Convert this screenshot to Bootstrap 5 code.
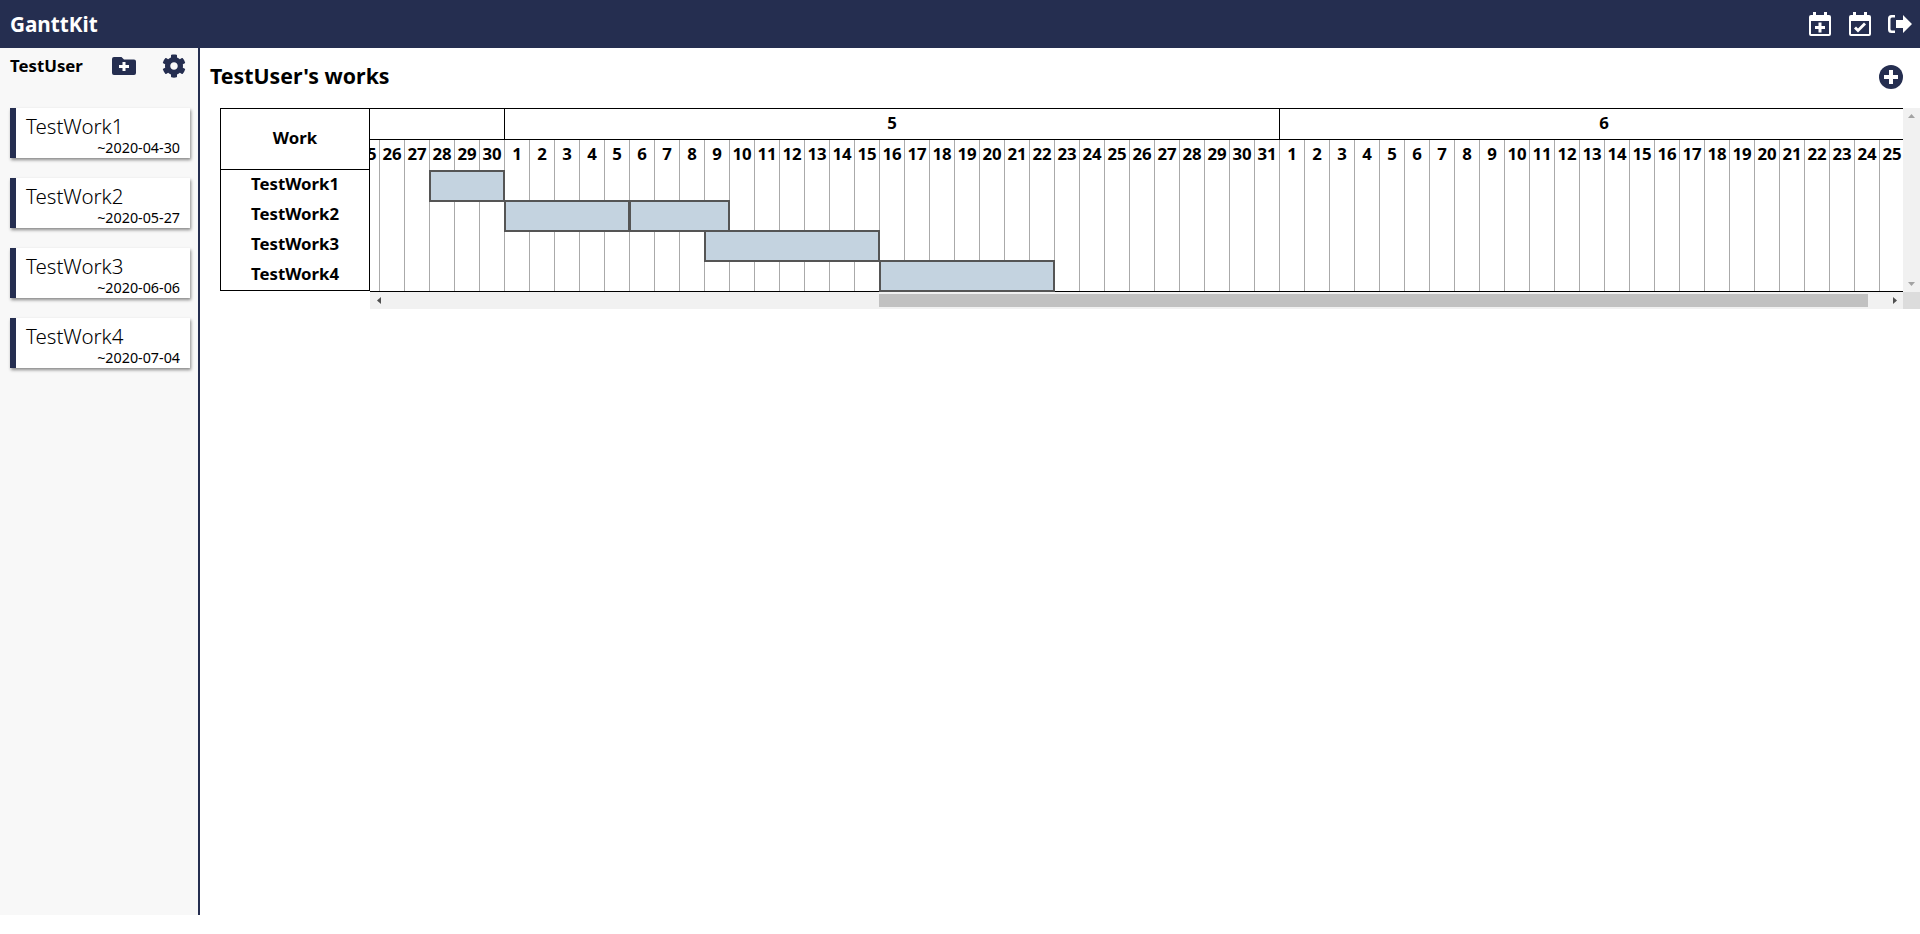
<!DOCTYPE html>
<html lang="en">
<head>
<meta charset="utf-8">
<title>GanttKit</title>
<link href="https://cdn.jsdelivr.net/npm/bootstrap@5.3.0/dist/css/bootstrap.min.css" rel="stylesheet">
<style>
html,body{height:100%;background:#fff;}
body{font-family:"Noto Sans",sans-serif;color:#000;}
.gk-nav{height:48px;background:#252e50;padding:0 8px 0 10px;}
.gk-brand{font-size:20.700px;font-weight:700;color:#fff;line-height:1;}
.gk-shell{height:867px;}
.gk-side{width:200px;flex:none;background:#f8f8f8;border-right:2px solid #252e50;}
.gk-sidehead{height:36px;margin-bottom:24px;padding:0 12px 0 10px;}
.gk-user{font-size:16.800px;font-weight:700;width:103px;}
.gk-work{height:50px;margin:0 8px 20px 10px;background:#fff;border-left:6px solid #252e50;box-shadow:1px 2px 3px rgba(0,0,0,.45);padding:5px 10px 0 10px;}
.gk-wname{font-size:20.500px;line-height:26px;font-weight:300;}
.gk-wdate{font-size:14.300px;line-height:18px;text-align:right;}
.gk-main{min-width:0;padding:0 0 0 10px;}
.gk-head{height:48px;margin-top:12px;padding-right:17px;}
.gk-title{font-size:21.300px;font-weight:700;margin:4px 0 0;line-height:24px;}
.gk-gantt{padding-left:10px;font-weight:700;font-size:16.800px;}
.gk-names{width:150px;flex:none;height:183px;border:1px solid #000;}
.gk-namehead{height:61px;border-bottom:1px solid #000;padding-bottom:2px;}
.gk-name{height:30px;padding-bottom:2px;}
.gk-chart{width:1550px;flex:none;}
.gk-view{width:1533px;height:184px;overflow:hidden;flex:none;}
.gk-months{height:32px;border-top:1px solid #000;border-bottom:1px solid #000;}
.gk-month{border-right:1px solid #000;line-height:27px;text-align:center;flex:none;}
.gk-m4{width:135px;}.gk-m5{width:775px;}.gk-m6{width:648px;border-right:0;}
.gk-days{height:30px;margin-left:-15px;}
.gk-day{width:25px;flex:none;border-right:1px solid #aaa;text-align:center;line-height:27px;white-space:nowrap;}
.gk-grid{position:relative;height:122px;border-bottom:1px solid #000;background:linear-gradient(to left,#aaa 1px,transparent 1px) 10px 0/25px 100% repeat-x;}
.gk-bar{position:absolute;height:32px;background:#c4d3e0;border:2px solid #555;}
.gk-vbar{width:17px;height:184px;background:#f1f1f1;padding:6px 0;}
.gk-hbar{width:1533px;height:17px;background:#f1f1f1;}
.gk-hbtn{width:17px;flex:none;}
.gk-gap{width:492px;flex:none;}
.gk-thumb{width:989px;height:13px;background:#c1c1c1;flex:none;}
.gk-corner{width:17px;height:17px;background:#dcdcdc;}
.gk-ico{display:block;flex:none;}
</style>
</head>
<body>
<nav class="navbar gk-nav d-flex justify-content-between align-items-center">
  <span class="gk-brand">GanttKit</span>
  <div class="d-flex align-items-center">
    <svg class="gk-ico" style="margin-right:18px" width="22" height="24" viewBox="0 0 22 24" fill="#fff"><path d="M4 0h3v3h8V0h3v3h2a2 2 0 0 1 2 2v17a2 2 0 0 1-2 2H2a2 2 0 0 1-2-2V5a2 2 0 0 1 2-2h2zM2 9v13h18V9z"/><path d="M9.500 10.500h3v3.500H16v3h-3.500v3.500h-3V17H6v-3h3.500z"/></svg>
    <svg class="gk-ico" style="margin-right:17px" width="22" height="24" viewBox="0 0 22 24" fill="#fff"><path d="M4 0h3v3h8V0h3v3h2a2 2 0 0 1 2 2v17a2 2 0 0 1-2 2H2a2 2 0 0 1-2-2V5a2 2 0 0 1 2-2h2zM2 9v13h18V9z"/><path d="M9 20.500l-4-4 2-2 2 2 6-6 2 2z"/></svg>
    <svg class="gk-ico" width="24" height="18" viewBox="0 0 24 18" fill="#fff"><path d="M15 0l9 9-9 9v-5H8V5h7z"/><path d="M7 0v2.500H4A1.500 1.500 0 0 0 2.500 4v10A1.500 1.500 0 0 0 4 15.500h3V18H3.500A3.500 3.500 0 0 1 0 14.500v-11A3.500 3.500 0 0 1 3.500 0z"/></svg>
  </div>
</nav>
<div class="d-flex gk-shell">
  <aside class="gk-side">
    <div class="gk-sidehead d-flex align-items-center">
      <span class="gk-user">TestUser</span>
      <svg class="gk-ico" width="24" height="18" viewBox="0 0 24 18" fill="#252e50"><path d="M2 0h7.500l2.500 2.500h10a2 2 0 0 1 2 2V16a2 2 0 0 1-2 2H2a2 2 0 0 1-2-2V2a2 2 0 0 1 2-2z"/><path d="M10.500 5h3v3H17v3h-3.500v3h-3v-3H7V8h3.500z" fill="#fff"/></svg>
      <svg class="gk-ico" style="margin-left:26px" width="24" height="24" viewBox="0 0 512 512" fill="#252e50"><path d="M487.400 315.700l-42.600-24.600c4.300-23.200 4.300-47 0-70.200l42.600-24.600c4.900-2.800 7.100-8.600 5.500-14-11.100-35.600-30-67.800-54.700-94.600-3.800-4.100-10-5.100-14.800-2.300L380.800 110c-17.900-15.400-38.500-27.300-60.800-35.100V25.800c0-5.600-3.900-10.500-9.400-11.700-36.700-8.200-74.300-7.800-109.200 0-5.500 1.200-9.400 6.100-9.400 11.700V75c-22.200 7.900-42.800 19.800-60.800 35.100L88.700 85.500c-4.900-2.800-11-1.900-14.800 2.300-24.700 26.700-43.600 58.900-54.700 94.600-1.700 5.400.6 11.200 5.500 14L67.300 221c-4.300 23.200-4.300 47 0 70.200l-42.600 24.600c-4.900 2.800-7.100 8.600-5.500 14 11.100 35.600 30 67.800 54.700 94.600 3.800 4.100 10 5.100 14.800 2.300l42.600-24.600c17.900 15.400 38.500 27.300 60.800 35.100v49.200c0 5.600 3.900 10.500 9.400 11.700 36.700 8.200 74.300 7.800 109.200 0 5.500-1.200 9.400-6.100 9.400-11.700v-49.200c22.200-7.900 42.800-19.800 60.800-35.100l42.600 24.600c4.900 2.800 11 1.900 14.800-2.300 24.700-26.700 43.600-58.900 54.700-94.600 1.500-5.500-.7-11.300-5.600-14.100zM256 336c-44.100 0-80-35.900-80-80s35.900-80 80-80 80 35.900 80 80-35.900 80-80 80z"/></svg>
    </div>
    <div class="gk-work"><div class="gk-wname">TestWork1</div><div class="gk-wdate">~2020-04-30</div></div>
    <div class="gk-work"><div class="gk-wname">TestWork2</div><div class="gk-wdate">~2020-05-27</div></div>
    <div class="gk-work"><div class="gk-wname">TestWork3</div><div class="gk-wdate">~2020-06-06</div></div>
    <div class="gk-work"><div class="gk-wname">TestWork4</div><div class="gk-wdate">~2020-07-04</div></div>
  </aside>
  <main class="gk-main flex-grow-1">
    <div class="gk-head d-flex justify-content-between align-items-start">
      <h1 class="gk-title">TestUser's works</h1>
      <svg class="gk-ico" style="margin-top:5px" width="24" height="24" viewBox="0 0 24 24"><circle cx="12" cy="12" r="12" fill="#252e50"/><path d="M10 5h4v5h5v4h-5v5h-4v-5H5v-4h5z" fill="#fff"/></svg>
    </div>
    <div class="gk-gantt d-flex align-items-start">
      <div class="gk-names text-center">
        <div class="gk-namehead d-flex align-items-center justify-content-center">Work</div>
        <div class="gk-name d-flex align-items-center justify-content-center">TestWork1</div>
        <div class="gk-name d-flex align-items-center justify-content-center">TestWork2</div>
        <div class="gk-name d-flex align-items-center justify-content-center">TestWork3</div>
        <div class="gk-name d-flex align-items-center justify-content-center">TestWork4</div>
      </div>
      <div class="gk-chart">
        <div class="d-flex">
          <div class="gk-view">
            <div class="gk-months d-flex"><div class="gk-month gk-m4"></div><div class="gk-month gk-m5">5</div><div class="gk-month gk-m6">6</div></div>
            <div class="gk-days d-flex">
              <div class="gk-day">25</div><div class="gk-day">26</div><div class="gk-day">27</div><div class="gk-day">28</div><div class="gk-day">29</div><div class="gk-day">30</div>
              <div class="gk-day">1</div><div class="gk-day">2</div><div class="gk-day">3</div><div class="gk-day">4</div><div class="gk-day">5</div><div class="gk-day">6</div><div class="gk-day">7</div><div class="gk-day">8</div><div class="gk-day">9</div><div class="gk-day">10</div><div class="gk-day">11</div><div class="gk-day">12</div><div class="gk-day">13</div><div class="gk-day">14</div><div class="gk-day">15</div><div class="gk-day">16</div><div class="gk-day">17</div><div class="gk-day">18</div><div class="gk-day">19</div><div class="gk-day">20</div><div class="gk-day">21</div><div class="gk-day">22</div><div class="gk-day">23</div><div class="gk-day">24</div><div class="gk-day">25</div><div class="gk-day">26</div><div class="gk-day">27</div><div class="gk-day">28</div><div class="gk-day">29</div><div class="gk-day">30</div><div class="gk-day">31</div>
              <div class="gk-day">1</div><div class="gk-day">2</div><div class="gk-day">3</div><div class="gk-day">4</div><div class="gk-day">5</div><div class="gk-day">6</div><div class="gk-day">7</div><div class="gk-day">8</div><div class="gk-day">9</div><div class="gk-day">10</div><div class="gk-day">11</div><div class="gk-day">12</div><div class="gk-day">13</div><div class="gk-day">14</div><div class="gk-day">15</div><div class="gk-day">16</div><div class="gk-day">17</div><div class="gk-day">18</div><div class="gk-day">19</div><div class="gk-day">20</div><div class="gk-day">21</div><div class="gk-day">22</div><div class="gk-day">23</div><div class="gk-day">24</div><div class="gk-day">25</div>
            </div>
            <div class="gk-grid">
              <div class="gk-bar" style="left:59px;width:76px;top:0"></div>
              <div class="gk-bar" style="left:134px;width:126px;top:30px"></div>
              <div class="gk-bar" style="left:259px;width:101px;top:30px"></div>
              <div class="gk-bar" style="left:334px;width:176px;top:60px"></div>
              <div class="gk-bar" style="left:509px;width:176px;top:90px"></div>
            </div>
          </div>
          <div class="gk-vbar d-flex flex-column justify-content-between align-items-center">
            <svg class="gk-ico" width="7" height="4" viewBox="0 0 7 4" fill="#a3a3a3"><path d="M0 4h7L3.500 0z"/></svg>
            <svg class="gk-ico" width="7" height="4" viewBox="0 0 7 4" fill="#a3a3a3"><path d="M0 0h7L3.500 4z"/></svg>
          </div>
        </div>
        <div class="d-flex">
          <div class="gk-hbar d-flex align-items-center">
            <div class="gk-hbtn d-flex justify-content-center"><svg class="gk-ico" width="4" height="7" viewBox="0 0 4 7" fill="#505050"><path d="M4 0v7L0 3.500z"/></svg></div>
            <div class="gk-gap"></div>
            <div class="gk-thumb"></div>
            <div class="flex-grow-1"></div>
            <div class="gk-hbtn d-flex justify-content-center"><svg class="gk-ico" width="4" height="7" viewBox="0 0 4 7" fill="#505050"><path d="M0 0v7l4-3.500z"/></svg></div>
          </div>
          <div class="gk-corner"></div>
        </div>
      </div>
    </div>
  </main>
</div>
<script src="https://cdn.jsdelivr.net/npm/bootstrap@5.3.0/dist/js/bootstrap.bundle.min.js"></script>
</body>
</html>
